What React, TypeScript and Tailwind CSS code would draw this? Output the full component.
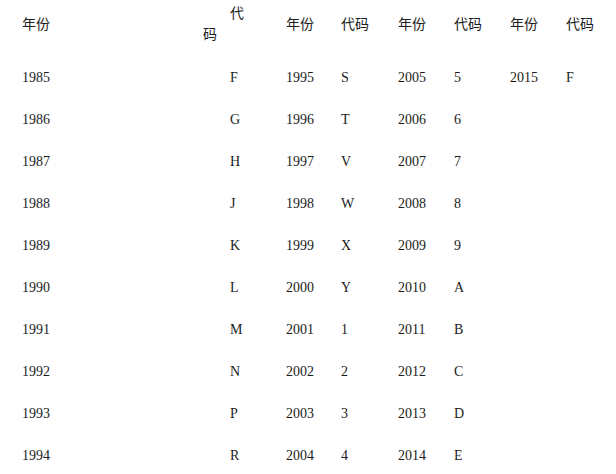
const cols = 'grid grid-cols-[208px_56px_55px_57px_56px_56px_56px_1fr]';

const rows: string[][] = [
  ['1985', 'F', '1995', 'S', '2005', '5', '2015', 'F'],
  ['1986', 'G', '1996', 'T', '2006', '6', '', ''],
  ['1987', 'H', '1997', 'V', '2007', '7', '', ''],
  ['1988', 'J', '1998', 'W', '2008', '8', '', ''],
  ['1989', 'K', '1999', 'X', '2009', '9', '', ''],
  ['1990', 'L', '2000', 'Y', '2010', 'A', '', ''],
  ['1991', 'M', '2001', '1', '2011', 'B', '', ''],
  ['1992', 'N', '2002', '2', '2012', 'C', '', ''],
  ['1993', 'P', '2003', '3', '2013', 'D', '', ''],
  ['1994', 'R', '2004', '4', '2014', 'E', '', ''],
];

export default function App() {
  return (
    <div className="w-[616px] h-[474px] overflow-hidden bg-white pl-[22px] text-[14px] text-[#1c1c1c] font-['Liberation_Serif','Noto_Sans_CJK_SC',serif]">
      {/* header */}
      <div className={`${cols} h-[56px] pb-[8px] items-center leading-[21px]`}>
        <span>年份</span>
        <div className="flex flex-col">
          <span>代</span>
          <span className="-ml-[27px]">码</span>
        </div>
        <span>年份</span>
        <span>代码</span>
        <span>年份</span>
        <span>代码</span>
        <span>年份</span>
        <span>代码</span>
      </div>

      {/* body */}
      {rows.map(r => (
        <div key={r[0]} className={`${cols} h-[42px] items-center`}>
          {r.map((c, i) => (
            <span key={i}>{c}</span>
          ))}
        </div>
      ))}
    </div>
  );
}
